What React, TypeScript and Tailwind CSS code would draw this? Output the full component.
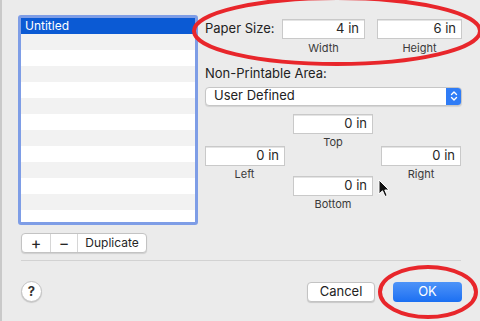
import { ReactNode } from 'react';

const Field = ({ value, className = '' }: { value: string; className?: string }) => (
  <div
    className={`h-[20px] bg-white border border-[#c9c9c9] shadow-[inset_0_1px_0_#e4e4e4] flex items-center justify-end pr-[5px] text-[13px] text-[#262626] ${className}`}
  >
    {value}
  </div>
);

const Caption = ({ children }: { children: ReactNode }) => (
  <div className="text-center text-[11px] leading-[13px] text-[#3a3a3a]">{children}</div>
);

const MarginBox = ({ label, className = '' }: { label: string; className?: string }) => (
  <div className={`flex flex-col gap-[2px] ${className}`}>
    <Field value="0 in" className="w-[80px]" />
    <Caption>{label}</Caption>
  </div>
);

const App = () => {
  const rows = Array.from({ length: 12 });

  return (
    <div
      className="relative w-[480px] h-[321px] overflow-hidden bg-[#ebebeb] border-l-2 border-[#c9c9c9] text-[#222]"
      style={{ fontFamily: 'Inter, "Liberation Sans", sans-serif' }}
    >
      {/* window edge */}
      <div className="absolute left-[-2px] top-[34px] w-[2px] h-[50px] bg-[#5e5e5e]" />

      <div className="flex pl-[16px] pt-[15px] gap-[7px]">
        {/* preset list */}
        <div className="flex flex-col w-[180px]">
          <div className="h-[210px] border-[3px] border-[#7e9de6] rounded-[3px] bg-white overflow-hidden">
            <div className="h-[16px] bg-[#0b5ad4] text-white text-[12px] leading-[16px] pl-[4px]">Untitled</div>
            {rows.map((_, i) => (
              <div key={i} className={`h-[16px] ${i % 2 === 0 ? 'bg-[#f2f2f2]' : 'bg-white'}`} />
            ))}
          </div>
          <div className="mt-[8px] ml-[3px] flex h-[20px] w-[126px] bg-white border border-[#c3c3c3] rounded-[4px] shadow-[0_1px_1px_rgba(0,0,0,0.12)] text-[12px] text-[#262626]">
            <div className="w-[29px] flex items-center justify-center border-r border-[#d6d6d6] text-[16px] leading-none">+</div>
            <div className="w-[27px] flex items-center justify-center border-r border-[#d6d6d6] text-[16px] leading-none">−</div>
            <div className="flex-1 flex items-center justify-center">Duplicate</div>
          </div>
        </div>

        {/* settings */}
        <div className="flex flex-col pt-[4px] w-[257px]">
          <div className="flex items-center h-[19px]">
            <div className="w-[77px] text-[13px]">Paper Size:</div>
            <Field value="4 in" className="w-[83px] h-[19px]" />
            <Field value="6 in" className="w-[85px] h-[19px] ml-[12px]" />
          </div>
          <div className="flex mt-[2px] text-[11px] text-[#3a3a3a]">
            <div className="w-[77px]" />
            <div className="w-[83px] text-center">Width</div>
            <div className="w-[85px] ml-[12px] text-center">Height</div>
          </div>

          <div className="mt-[8px] text-[13px] leading-[16px]">Non-Printable Area:</div>

          <div className="mt-[6px] h-[19px] flex bg-white border border-[#c6c6c6] rounded-[4px] shadow-[0_1px_1px_rgba(0,0,0,0.1)] overflow-hidden">
            <div className="flex-1 flex items-center pl-[8px] text-[13px]">User Defined</div>
            <div className="w-[15px] bg-[#2f7cf6] flex items-center justify-center">
              <svg width="8" height="12" viewBox="0 0 8 12" fill="none" stroke="white" strokeWidth="1.4" strokeLinecap="round" strokeLinejoin="round">
                <path d="M1.5 4.5 L4 2 L6.5 4.5" />
                <path d="M1.5 7.5 L4 10 L6.5 7.5" />
              </svg>
            </div>
          </div>

          <div className="flex mt-[8px]">
            <MarginBox label="Left" className="mt-[32px] w-[79px]" />
            <div className="flex flex-col ml-[9px] w-[80px]">
              <MarginBox label="Top" />
              <MarginBox label="Bottom" className="mt-[27px]" />
            </div>
            <MarginBox label="Right" className="mt-[32px] ml-[8px]" />
          </div>
        </div>
      </div>

      {/* separator */}
      <div className="mt-[7px] ml-[19px] mr-[19px] border-t border-[#d2d2d2]" />

      {/* footer buttons */}
      <div className="flex items-center ml-[19px] mr-[18px] mt-[20px]">
        <div className="w-[21px] h-[21px] rounded-full bg-white border border-[#c3c3c3] shadow-[0_1px_1px_rgba(0,0,0,0.15)] flex items-center justify-center text-[13px] font-bold text-[#333]">
          ?
        </div>
        <div className="flex-1" />
        <div className="w-[68px] h-[20px] bg-white border border-[#c3c3c3] rounded-[4px] shadow-[0_1px_1px_rgba(0,0,0,0.15)] flex items-center justify-center text-[13px]">
          Cancel
        </div>
        <div className="w-[69px] h-[20px] ml-[18px] rounded-[4px] bg-gradient-to-b from-[#4d93f8] to-[#1a6ff2] flex items-center justify-center text-[13px] text-white">
          OK
        </div>
      </div>

      {/* mouse cursor */}
      <svg className="absolute left-[376px] top-[179px]" width="12" height="19" viewBox="0 0 12 19">
        <path d="M1 1 L1 15 L4.5 11.8 L7 17.5 L9.2 16.5 L6.8 11 L11 11 Z" fill="#111" stroke="white" strokeWidth="1" strokeLinejoin="round" />
      </svg>

      {/* annotations */}
      <svg className="absolute inset-0 pointer-events-none" width="480" height="321" viewBox="0 0 480 321">
        <ellipse cx="335" cy="31" rx="143" ry="33" fill="none" stroke="#e8262b" strokeWidth="4" />
        <ellipse cx="426" cy="292" rx="48" ry="25" fill="none" stroke="#e8262b" strokeWidth="4" />
      </svg>
    </div>
  );
};

export default App;
